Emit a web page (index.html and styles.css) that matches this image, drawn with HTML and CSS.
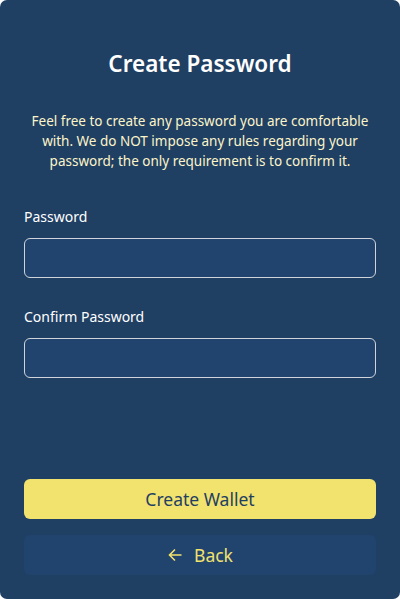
FILE: index.html
```html
<!DOCTYPE html>
<html>
<head>
<meta charset="utf-8">
<link rel="stylesheet" href="styles.css">
</head>
<body>
<div class="card">
  <h1 class="title">Create Password</h1>
  <p class="desc">Feel free to create any password you are comfortable with. We do NOT impose any rules regarding your password; the only requirement is to confirm it.</p>
  <div class="field">
    <label class="label">Password</label>
    <div class="input"></div>
  </div>
  <div class="field">
    <label class="label">Confirm Password</label>
    <div class="input"></div>
  </div>
  <div class="spacer"></div>
  <div class="actions">
    <button class="btn primary">Create Wallet</button>
    <button class="btn secondary">
      <svg class="arrow" width="16" height="16" viewBox="0 0 16 16"><path d="M14.5 8H2.5M8 2.5L2.5 8L8 13.5" fill="none" stroke="currentColor" stroke-width="1.6"/></svg>
      <span>Back</span>
    </button>
  </div>
</div>
</body>
</html>
```
FILE: styles.css
```css
html, body { margin: 0; padding: 0; background: #ffffff; }
body { font-family: "Noto Sans", "Open Sans", sans-serif; }
.card {
  box-sizing: border-box;
  width: 400px;
  height: 599px;
  background: #1f3f63;
  border-radius: 7px;
  padding: 50px 24px 24px;
  display: flex;
  flex-direction: column;
}
.title {
  margin: 0;
  text-align: center;
  color: #ffffff;
  font-size: 22.5px;
  font-weight: 600;
  line-height: 28px;
}
.desc {
  margin: 33px 4px 0;
  text-align: center;
  color: #fdf5c9;
  font-size: 13.5px;
  line-height: 20px;
}
.field { display: flex; flex-direction: column; }
.label {
  color: #ffffff;
  font-size: 14px;
  line-height: 20px;
  margin-bottom: 11px;
}
.desc + .field .label { margin-top: 36px; }
.field + .field .label { margin-top: 29px; }
.input {
  box-sizing: border-box;
  height: 40px;
  background: #21446e;
  border: 1px solid #d0d4da;
  border-radius: 6px;
}
.spacer { flex: 1; }
.actions { display: flex; flex-direction: column; gap: 16px; }
.btn {
  height: 40px;
  border: none;
  border-radius: 6px;
  font-family: inherit;
  font-size: 17.5px;
  display: flex;
  align-items: center;
  justify-content: center;
  gap: 11px;
  padding: 0;
}
.primary { background: #f2e26e; color: #1f3f63; }
.secondary { background: #21446e; color: #f2e26e; }
.arrow { display: block; }
```
